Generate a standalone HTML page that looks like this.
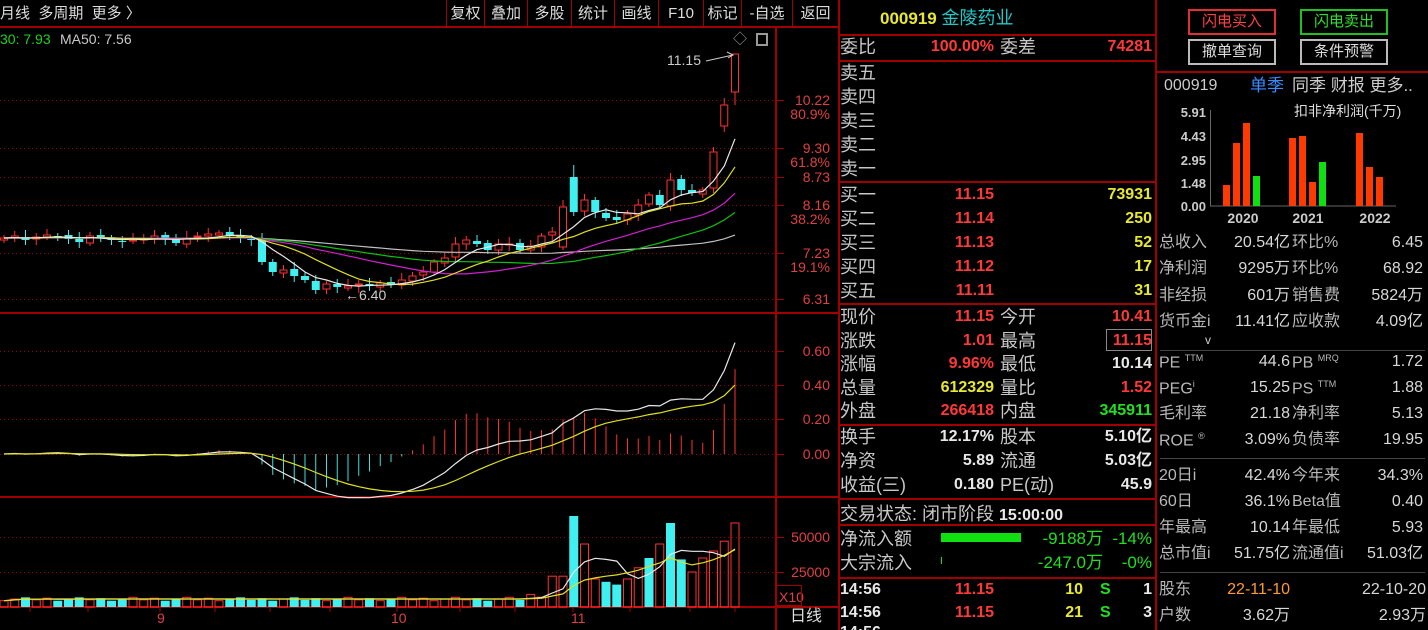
<!DOCTYPE html>
<html><head><meta charset="utf-8">
<style>
*{margin:0;padding:0;box-sizing:border-box}
html{overflow:hidden;width:1428px;height:630px}
body{width:1428px;height:630px;background:#000;overflow:hidden;position:relative;font-family:"Liberation Sans","Noto Sans CJK SC",sans-serif}
.t{position:absolute;white-space:nowrap;line-height:1}
.l{font-size:18px;color:#c8c8c8;left:840px}
.v{font-size:16px;font-weight:bold}
.r{color:#ff3838}.y{color:#e8e830}.g{color:#20e020}.w{color:#e8e8e8}
.hl{position:absolute;height:2px;background:#a00000}
.f{font-size:16px;color:#b8b8b8}
.fv{font-size:16px;color:#d8d8d8}
.btn{position:absolute;border:2px solid #bbb;font-size:15px;text-align:center;line-height:22px;color:#ddd;width:88px;height:26px}
</style></head><body>
<div class="t" style="left:0;top:6px;font-size:15px;color:#ddd">月线&nbsp;&nbsp;多周期&nbsp;&nbsp;更多 〉</div>
<div style="position:absolute;left:0;top:26px;width:838px;height:2px;background:#a00000"></div>
<div id="tb"></div>
<div class="t" style="left:0;top:32px;font-size:14px;color:#20d020">30: 7.93</div>
<div class="t" style="left:60px;top:32px;font-size:14px;color:#c8c8c8">MA50: 7.56</div>
<div class="t" style="left:733px;top:32px;font-size:14px;color:#999">◇</div>
<div style="position:absolute;left:756px;top:33px;width:12px;height:13px;border:2px solid #999"></div>
<div class="t" style="left:667px;top:53px;font-size:14px;color:#ccc">11.15</div>
<svg id="ch" width="838" height="630" style="position:absolute;left:0;top:0"></svg>
<div id="ax"></div>
<div class="t" style="left:779px;top:590px;font-size:14px;color:#e04040">X10</div>
<div style="position:absolute;left:776px;top:585px;width:26px;height:21px;border:1px solid #a00000"></div>
<div class="t" style="left:790px;top:609px;font-size:16px;color:#ddd">日线</div>
<div class="t" style="left:157px;top:611px;font-size:14px;color:#e04040">9</div>
<div class="t" style="left:391px;top:611px;font-size:14px;color:#e04040">10</div>
<div class="t" style="left:571px;top:611px;font-size:14px;color:#e04040">11</div>

<div style="position:absolute;left:838px;top:0;width:2px;height:630px;background:#a00000"></div>
<div style="position:absolute;left:1155px;top:0;width:2px;height:630px;background:#a00000"></div>
<div class="t" style="left:880px;top:9px;font-size:17px;font-weight:bold;color:#e8e830">000919 <span style="color:#20c8c8;font-weight:normal;font-size:18px">金陵药业</span></div>
<div class="hl" style="left:840px;top:34px;width:315px"></div>
<div class="t l" style="top:38px">委比</div>
<div class="t v r" style="right:434px;top:39px">100.00%</div>
<div class="t l" style="left:1000px;top:38px">委差</div>
<div class="t v r" style="right:276px;top:39px">74281</div>
<div class="hl" style="left:840px;top:60px;width:315px"></div>
<div class="t l" style="top:64px">卖五</div>
<div class="t l" style="top:88px">卖四</div>
<div class="t l" style="top:112px">卖三</div>
<div class="t l" style="top:136px">卖二</div>
<div class="t l" style="top:160px">卖一</div>
<div class="hl" style="left:840px;top:181px;width:315px"></div>
<div id="buy"></div>
<div class="hl" style="left:840px;top:303px;width:315px"></div>
<div id="q"></div>
<div class="hl" style="left:840px;top:424px;width:315px"></div>
<div class="hl" style="left:840px;top:498px;width:315px"></div>
<div class="t l" style="top:505px">交易状态: 闭市阶段 <b style="font-size:16px;color:#e8e8e8">15:00:00</b></div>
<div class="hl" style="left:840px;top:524px;width:315px"></div>
<div class="t l" style="top:530px">净流入额</div>
<div class="t l" style="top:554px">大宗流入</div>
<div style="position:absolute;left:941px;top:533px;width:80px;height:9px;background:#10e010"></div>
<div style="position:absolute;left:941px;top:557px;width:1px;height:7px;background:#10e010"></div>
<div class="t" style="right:325px;top:530px;font-size:17px;color:#20e020">-9188万</div>
<div class="t" style="right:276px;top:530px;font-size:17px;color:#20e020">-14%</div>
<div class="t" style="right:325px;top:554px;font-size:17px;color:#20e020">-247.0万</div>
<div class="t" style="right:276px;top:554px;font-size:17px;color:#20e020">-0%</div>
<div class="hl" style="left:840px;top:577px;width:315px"></div>
<div class="t v w" style="left:840px;top:582px">14:56</div>
<div class="t v r" style="right:434px;top:582px">11.15</div>
<div class="t v y" style="right:345px;top:582px">10</div>
<div class="t v g" style="left:1100px;top:582px">S</div>
<div class="t v w" style="right:276px;top:582px">1</div>
<div class="t v w" style="left:840px;top:605px">14:56</div>
<div class="t v r" style="right:434px;top:605px">11.15</div>
<div class="t v y" style="right:345px;top:605px">21</div>
<div class="t v g" style="left:1100px;top:605px">S</div>
<div class="t v w" style="right:276px;top:605px">3</div>
<div class="t v w" style="left:840px;top:625px">14:56</div>

<div class="btn" style="left:1188px;top:9px;border-color:#e03030;color:#ff4040">闪电买入</div>
<div class="btn" style="left:1300px;top:9px;border-color:#20c020;color:#30e030">闪电卖出</div>
<div class="btn" style="left:1188px;top:39px">撤单查询</div>
<div class="btn" style="left:1300px;top:39px">条件预警</div>
<div class="hl" style="left:1157px;top:71px;width:271px"></div>
<div class="t" style="left:1164px;top:78px;font-size:16px;color:#ccc">000919</div>
<div class="t" style="left:1250px;top:77px;font-size:17px;color:#3a8cff">单季</div>
<div class="t" style="left:1292px;top:77px;font-size:17px;color:#ccc">同季 财报 更多..</div>
<div class="t" style="left:1294px;top:104px;font-size:14px;color:#ddd">扣非净利润(千万)</div>
<svg width="272" height="160" style="position:absolute;left:1156px;top:90px">
<g font-family="Liberation Sans" font-size="13" font-weight="bold" fill="#ccc" text-anchor="end">
<text x="50" y="27">5.91</text><text x="50" y="51">4.43</text><text x="50" y="75">2.95</text><text x="50" y="98">1.48</text><text x="50" y="121">0.00</text></g>
<line x1="54.5" y1="20" x2="54.5" y2="116" stroke="#666"/>
<line x1="54" y1="116" x2="240" y2="116" stroke="#666"/>
<g fill="#ff3a00"><rect x="67" y="95" width="7" height="21"/><rect x="77" y="53" width="7" height="63"/><rect x="87" y="33" width="7" height="83"/>
<rect x="133" y="48" width="7" height="68"/><rect x="143" y="46" width="7" height="70"/><rect x="153" y="92" width="7" height="24"/>
<rect x="200" y="43" width="7" height="73"/><rect x="210" y="77" width="7" height="39"/><rect x="220" y="87" width="7" height="29"/></g>
<g fill="#10e010"><rect x="97" y="86" width="7" height="30"/><rect x="163" y="72" width="7" height="44"/></g>
<g font-family="Liberation Sans" font-size="14" font-weight="bold" fill="#ccc" text-anchor="middle">
<text x="87" y="133">2020</text><text x="152" y="133">2021</text><text x="219" y="133">2022</text></g>
</svg>
<div id="fin"></div>
<div class="t" style="left:1205px;top:334px;font-size:12px;color:#ccc">v</div>
<div style="position:absolute;left:1160px;top:350px;width:265px;height:1px;background:#444"></div>
<div style="position:absolute;left:1160px;top:458px;width:265px;height:1px;background:#444"></div>
<div style="position:absolute;left:1160px;top:572px;width:265px;height:1px;background:#444"></div>

<script>
var svg=document.getElementById('ch'),H='';
function ln(x1,y1,x2,y2,c,w,d){H+='<line x1="'+x1+'" y1="'+y1+'" x2="'+x2+'" y2="'+y2+'" stroke="'+c+'" stroke-width="'+(w||1)+'"'+(d?' stroke-dasharray="'+d+'"':'')+'/>';}
ln(776,28,776,630,'#a00000',2);ln(0,313,838,313,'#a00000',2);ln(0,497,838,497,'#a00000',2);ln(0,607,838,607,'#a00000',2);
[100,148,177,205,253,299].forEach(function(y){ln(0,y+.5,776,y+.5,'#900000',1,'1 3');ln(776,y+.5,784,y+.5,'#a00000')});
[351,385,419,454].forEach(function(y){ln(0,y+.5,776,y+.5,'#900000',1,'1 3');ln(776,y+.5,784,y+.5,'#a00000')});
[537,572].forEach(function(y){ln(0,y+.5,776,y+.5,'#900000',1,'1 3');ln(776,y+.5,784,y+.5,'#a00000')});
[30,88,160,215,270,330,397,460,515,573,630,690,735].forEach(function(x){ln(x,607,x,612,'#a00000')});
var C=[238,236,240,237,235,236,239,242,236,238,240,242,240,238,236,239,243,238,236,234,233,236,238,
240,262,272,270,276,280,290,284,287,286,284,286,283,285,280,276,272,262,
258,244,240,244,250,244,244,250,246,236,232,
207,212,200,212,218,220,214,205,195,205,180,190,193,190,152,105,54];
var ov={52:[247,207],53:[177,212],66:[188,152],67:[126,105],68:[92,54]};
var n=C.length,sp=10.75,O=[];
for(var i=0;i<n;i++){O[i]=ov[i]?ov[i][0]:(i?C[i-1]+((i%3)-1):C[i]+2);}
function X(i){return 4+i*sp;}
var up=[];
for(i=0;i<n;i++){var o=O[i],c=C[i],x=X(i),t=Math.min(o,c),b=Math.max(o,c),u=c<o;up[i]=u;if(b-t<1)b=t+1;
var hi=t-3-(i*7%5),lo=b+3+(i*5%4);if(i==53)hi=165;if(i==68){hi=54;lo=105}if(i==33)lo=293;
var col=u?'#ff3030':'#40f0f0';
ln(x,hi,x,t,col);ln(x,b,x,lo,col);
if(u)H+='<rect x="'+(x-3.5)+'" y="'+t+'" width="7" height="'+(b-t)+'" fill="none" stroke="'+col+'"/>';
else H+='<rect x="'+(x-4)+'" y="'+t+'" width="8" height="'+(b-t)+'" fill="'+col+'"/>';}
function ma(a,k){var r=[];for(var i=0;i<a.length;i++){var s=0,m=0;for(var j=Math.max(0,i-k+1);j<=i;j++){s+=a[j];m++}r.push(s/m)}return r;}
function pl(a,c,f){var p='';for(var i=0;i<a.length;i++)p+=(i?'L':'M')+X(i).toFixed(1)+' '+f(a[i]).toFixed(1);H+='<path d="'+p+'" fill="none" stroke="'+c+'" stroke-width="1.2"/>';}
var id=function(v){return v};
var base=[];for(i=0;i<50;i++)base.push(238);var CC=base.concat(C);
function mab(k){return ma(CC,k).slice(50);}
pl(mab(50),'#c0c0c0',id);pl(mab(30),'#10c010',id);pl(mab(20),'#d020d0',id);pl(mab(10),'#e0e020',id);pl(mab(5),'#e8e8e8',id);
H+='<text x="345" y="300" font-family="Liberation Sans" font-size="14" fill="#ccc">←6.40</text>';
H+='<path d="M706 61 L733 55 M727 52 L733 55 L728 58" stroke="#ccc" fill="none"/>';
var P=C.map(function(y){return 10.22-(y-100)/50.9});
function ema(a,k){var r=[a[0]],al=2/(k+1);for(var i=1;i<a.length;i++)r.push(al*a[i]+(1-al)*r[i-1]);return r;}
var e12=ema(P,12),e26=ema(P,26),dif=e12.map(function(v,i){return v-e26[i]}),dea=ema(dif,9);
var my=function(v){return 454-v*171.7};
for(i=0;i<n;i++){var h=2*(dif[i]-dea[i]);ln(X(i),454,X(i),my(h),h>=0?'#ff3030':'#40e0e0');}
pl(dif,'#e8e8e8',my);pl(dea,'#e0e020',my);
var V=[];for(i=0;i<n;i++)V.push(4500+(i*37%5)*600);
var vo={49:9000,50:7000,51:22000,52:22000,53:65000,54:45000,55:20000,56:18000,57:16000,58:20000,59:28000,60:35000,61:45000,62:60000,63:34000,64:25000,65:35000,66:40000,67:47000,68:60000};
for(var k in vo)V[k]=vo[k];
[53,56,57,60,62,63].forEach(function(j){up[j]=false});
[51,52,54,55,58,59,61,64,65,66,67,68].forEach(function(j){up[j]=true});
var vy=function(v){return 607-v*0.0014};
for(i=0;i<n;i++){var x=X(i),t=vy(V[i]);if(up[i])H+='<rect x="'+(x-4)+'" y="'+t+'" width="8" height="'+(607-t)+'" fill="none" stroke="#ff3030"/>';else H+='<rect x="'+(x-4.5)+'" y="'+t+'" width="9" height="'+(607-t)+'" fill="#40f0f0"/>';}
pl(ma(V,5),'#e8e8e8',vy);pl(ma(V,10),'#e0e020',vy);
svg.innerHTML=H;
var A=[[10.22,93],['80.9%',107],['9.30',141],['61.8%',155],['8.73',170],['8.16',198],['38.2%',212],['7.23',246],['19.1%',260],['6.31',292],['0.60',344],['0.40',378],['0.20',412],['0.00',447],['50000',530],['25000',565]],s='';
A.forEach(function(a){s+='<div class="t" style="right:598px;top:'+a[1]+'px;font-size:14px;color:#e04040">'+a[0]+'</div>'});
document.getElementById('ax').innerHTML=s;
var T=[['复权',446,484],['叠加',484,527],['多股',527,571],['统计',571,614],['画线',614,658],['F10',658,703],['标记',703,741],['-自选',741,792],['返回',792,838]];s='';
T.forEach(function(a){s+='<div style="position:absolute;left:'+a[1]+'px;top:0;width:'+(a[2]-a[1])+'px;height:27px;border-left:1px solid #a00000;color:#ddd;font-size:15px;text-align:center;line-height:28px">'+a[0]+'</div>'});
document.getElementById('tb').innerHTML=s;
var B=[['买一','11.15','73931'],['买二','11.14','250'],['买三','11.13','52'],['买四','11.12','17'],['买五','11.11','31']];s='';
B.forEach(function(b,i){var t=186+i*24;s+='<div class="t l" style="top:'+t+'px">'+b[0]+'</div><div class="t v r" style="right:434px;top:'+(t+1)+'px">'+b[1]+'</div><div class="t v y" style="right:276px;top:'+(t+1)+'px">'+b[2]+'</div>'});
document.getElementById('buy').innerHTML=s;
var Q=[['现价','11.15','r','今开','10.41','r',308],['涨跌','1.01','r','最高','11.15','r',332],['涨幅','9.96%','r','最低','10.14','w',355],['总量','612329','y','量比','1.52','r',379],['外盘','266418','r','内盘','345911','g',402],
['换手','12.17%','w','股本','5.10亿','w',428],['净资','5.89','w','流通','5.03亿','w',452],['收益(三)','0.180','w','PE(动)','45.9','w',476]];s='';
Q.forEach(function(q){var t=q[6];s+='<div class="t l" style="top:'+t+'px">'+q[0]+'</div><div class="t v '+q[2]+'" style="right:434px;top:'+(t+1)+'px">'+q[1]+'</div><div class="t l" style="left:1000px;top:'+t+'px">'+q[3]+'</div><div class="t v '+q[5]+'" style="right:276px;top:'+(t+1)+'px">'+q[4]+'</div>'});
s+='<div style="position:absolute;left:1106px;top:329px;width:46px;height:22px;border:1px solid #888"></div>';
document.getElementById('q').innerHTML=s;
var F=[['总收入','20.54亿','环比%','6.45',235],['净利润','9295万','环比%','68.92',261],['非经损','601万','销售费','5824万',288],['货币金i','11.41亿','应收款','4.09亿',314],
['PE <sup style="font-size:9px">TTM</sup>','44.6','PB <sup style="font-size:9px">MRQ</sup>','1.72',354],['PEG<sup style="font-size:9px">i</sup>','15.25','PS <sup style="font-size:9px">TTM</sup>','1.88',380],['毛利率','21.18','净利率','5.13',406],['ROE <sup style="font-size:9px">®</sup>','3.09%','负债率','19.95',432],
['20日i','42.4%','今年来','34.3%',468],['60日','36.1%','Beta值','0.40',494],['年最高','10.14','年最低','5.93',520],['总市值i','51.75亿','流通值i','51.03亿',546]];s='';
F.forEach(function(f){var t=f[4];s+='<div class="t f" style="left:1159px;top:'+t+'px">'+f[0]+'</div><div class="t fv" style="right:138px;top:'+t+'px">'+f[1]+'</div><div class="t f" style="left:1292px;top:'+t+'px">'+f[2]+'</div><div class="t fv" style="right:5px;top:'+t+'px">'+f[3]+'</div>'});
s+='<div class="t f" style="left:1159px;top:582px">股东</div><div class="t" style="right:138px;top:582px;font-size:16px;color:#ff9a30">22-11-10</div><div class="t fv" style="right:2px;top:582px">22-10-20</div>';
s+='<div class="t f" style="left:1159px;top:608px">户数</div><div class="t fv" style="right:138px;top:608px">3.62万</div><div class="t fv" style="right:2px;top:608px">2.93万</div>';
document.getElementById('fin').innerHTML=s;
</script>
</body></html>
